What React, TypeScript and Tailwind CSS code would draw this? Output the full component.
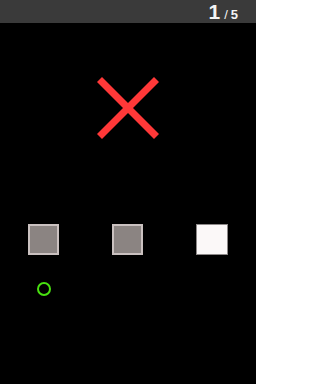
export default function App() {
  return (
    <div className="w-[256px] h-[384px] bg-black flex flex-col overflow-hidden" style={{ fontFamily: '"Liberation Sans", Arial, sans-serif' }}>
      <div className="h-[23px] bg-[#3a3a3a] flex items-end justify-end pr-[18px] pb-[1px] shrink-0">
        <div className="flex items-baseline text-[#f4f4f4] font-bold">
          <span className="text-[21px] leading-none">1</span>
          <span className="text-[13px] leading-none ml-[4px] font-normal">/</span>
          <span className="text-[13px] leading-none ml-[3px]">5</span>
        </div>
      </div>
      <div className="flex justify-center mt-[53px]">
        <svg width="64" height="64" viewBox="0 0 64 64">
          <line x1="3.5" y1="3.5" x2="60.5" y2="60.5" stroke="#ff3838" strokeWidth="7" />
          <line x1="60.5" y1="3.5" x2="3.5" y2="60.5" stroke="#ff3838" strokeWidth="7" />
        </svg>
      </div>
      <div className="flex justify-between px-[28px] mt-[84px]">
        <div className="w-[31px] h-[31px] bg-[#8b8482] border-2 border-[#cac1c0]" />
        <div className="w-[31px] h-[31px] bg-[#8b8482] border-2 border-[#cac1c0]" />
        <div className="w-[32px] h-[31px] bg-[#fbf8f8] border border-[#8c8888]" />
      </div>
      <div className="mt-[27px] ml-[37px] w-[14px] h-[14px] rounded-full border-[2.5px] border-[#48e010]" />
    </div>
  );
}
